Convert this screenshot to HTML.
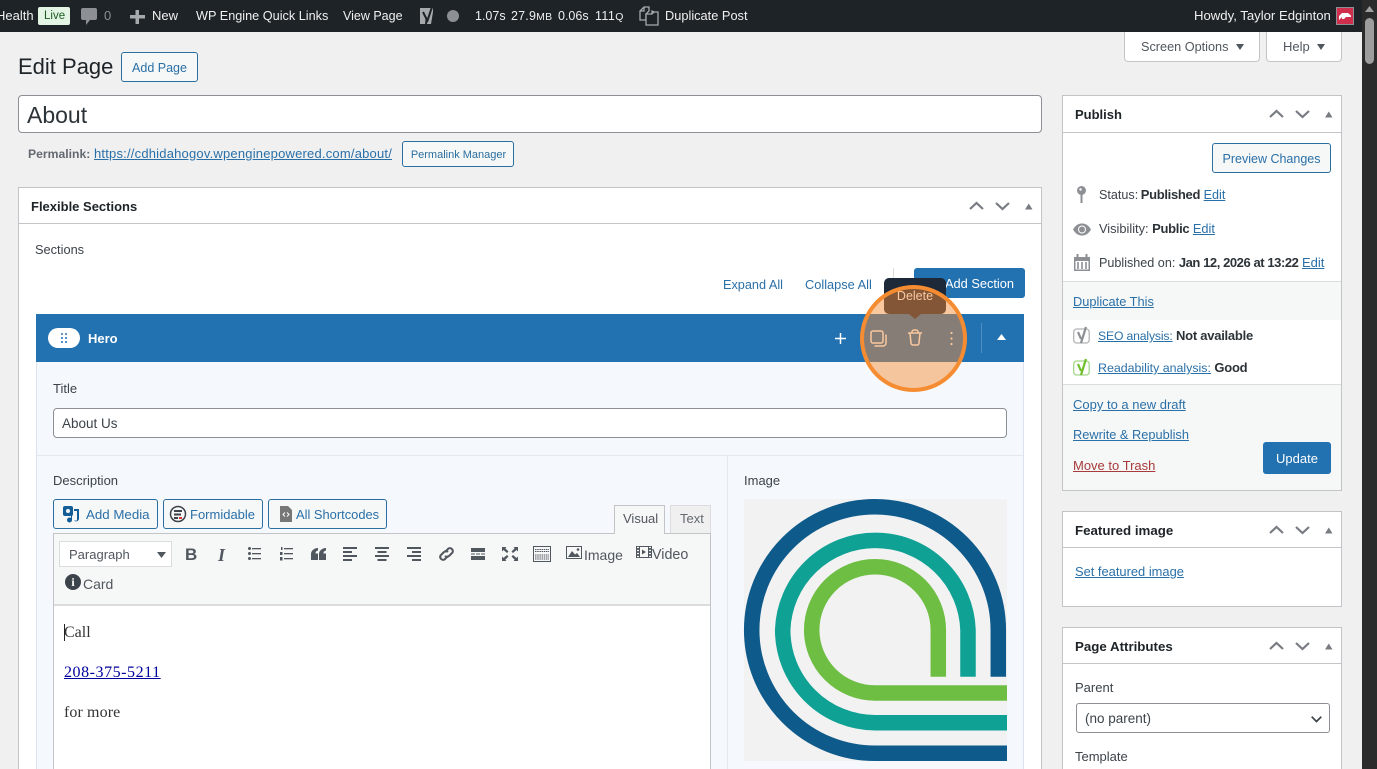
<!DOCTYPE html>
<html lang="en"><head><meta charset="utf-8"><title>Edit Page</title>
<style>
html,body{margin:0;padding:0;width:1377px;height:769px;overflow:hidden;background:#f0f0f1}
body{position:relative;font-family:"Liberation Sans",sans-serif;font-size:13px;color:#3c434a}
.t{position:absolute;white-space:nowrap;line-height:20px;margin-top:1px}
.w,.g,.n{margin-top:0}
.b{position:absolute;box-sizing:border-box}
.l{color:#2a70a8;text-decoration:underline}
.lk{color:#2a70a8}
.w{color:#f0f0f1}
.g{color:#8c8f94}
.btn{position:absolute;box-sizing:border-box;border:1px solid #2a6f9f;border-radius:3px;background:#f6f7f7;color:#2a70a8;text-align:center;white-space:nowrap}
.h{font-weight:bold;color:#1d2327;font-size:13.300px}
.s{font-weight:bold;letter-spacing:-.25px;color:#2c3338;font-size:13px}
svg{position:absolute;overflow:visible}
</style></head><body>
<svg width="0" height="0" style="position:absolute"><defs>
<g id="ctl" fill="none" stroke="#787c82" stroke-width="2.200"><path d="M0 6 L6.500 0 L13 6"/><path d="M26 0 L32.500 6 L39 0"/><path d="M55 6.500 H62.500 L58.750 .5 Z" fill="#787c82" stroke="none"/></g>
</defs></svg>

<!-- admin bar -->
<div class="b" style="left:0;top:0;width:1377px;height:32px;background:#1d2327"></div>
<span class="t w" style="left:-4px;top:6px">Health</span>
<div class="b" style="left:38px;top:7px;width:32px;height:18px;background:#e3f3e4;border-radius:2px"></div>
<span class="t n" style="left:44px;top:6px;color:#1a5c1f;font-size:11.500px">Live</span>
<svg style="left:81px;top:8px" width="16" height="18"><path d="M2 0H14a2 2 0 0 1 2 2V10a2 2 0 0 1-2 2H9L5 17V12H2a2 2 0 0 1-2-2V2a2 2 0 0 1 2-2Z" fill="#8c8f94"/></svg>
<span class="t g" style="left:104px;top:6px">0</span>
<svg style="left:130px;top:10px" width="15" height="14"><path d="M5.500 0H9V5H15V8.500H9V14H5.500V8.500H0V5H5.500Z" fill="#a7aaad"/></svg>
<span class="t w" style="left:152px;top:6px">New</span>
<span class="t w" style="left:196px;top:6px;font-size:12.700px">WP Engine Quick Links</span>
<span class="t w" style="left:343px;top:6px;font-size:12.500px">View Page</span>
<svg style="left:418px;top:7px" width="18" height="19"><path d="M2 1H15V5L13 17H2Z" fill="#a7aaad"/><path d="M5 5L8.500 12L8 17M14 0L9 15" stroke="#1d2327" stroke-width="2" fill="none"/></svg>
<div class="b" style="left:447px;top:10px;width:12px;height:12px;border-radius:50%;background:#8c8f94"></div>
<span class="t w" style="left:475px;top:6px;font-size:12.500px">1.07s</span>
<span class="t w" style="left:511px;top:6px;font-size:12.500px;letter-spacing:.2px">27.9<span style="font-size:10.500px">MB</span></span>
<span class="t w" style="left:558px;top:6px;font-size:12.500px">0.06s</span>
<span class="t w" style="left:595px;top:6px;font-size:12.500px;letter-spacing:.4px">111<span style="font-size:10.500px">Q</span></span>
<svg style="left:639px;top:6px" width="20" height="20" fill="none" stroke="#a7aaad" stroke-width="1.300"><path d="M1 14V5L5 1H10V5L7 8V14Z"/><path d="M7 8H13L15 6H19V19H7Z" fill="#1d2327"/><path d="M5 1V5H1"/><path d="M13 8V5L15 6"/></svg>
<span class="t w" style="left:665px;top:6px;font-size:12.800px">Duplicate Post</span>
<span class="t w" style="left:1194px;top:6px;font-size:13.150px">Howdy, Taylor Edginton</span>
<div class="b" style="left:1336px;top:7px;width:18px;height:18px;background:#cf2e4c;border:1px solid #8d8f94"></div>
<svg style="left:1339px;top:12px" width="12" height="8"><path d="M0 8V4L3 1H9L12 3.500V5H7L5 7H3V5Z" fill="#fff"/></svg>

<!-- scrollbar -->
<div class="b" style="left:1362px;top:0;width:15px;height:769px;background:#2b2b2b"></div>
<svg style="left:1365px;top:6px" width="9" height="6"><path d="M0 6L4.500 0L9 6Z" fill="#a0a0a0"/></svg>
<div class="b" style="left:1365px;top:18px;width:9px;height:46px;border-radius:5px;background:#9d9d9d"></div>

<!-- screen options -->
<div class="b" style="left:1124px;top:32px;width:136px;height:30px;background:#fff;border:1px solid #c3c4c7;border-top:0;border-radius:0 0 4px 4px"></div>
<span class="t" style="left:1141px;top:36px;color:#50575e;font-size:12.700px">Screen Options</span>
<svg style="left:1236px;top:44px" width="8" height="6"><path d="M0 0H8L4 6Z" fill="#50575e"/></svg>
<div class="b" style="left:1266px;top:32px;width:76px;height:30px;background:#fff;border:1px solid #c3c4c7;border-top:0;border-radius:0 0 4px 4px"></div>
<span class="t" style="left:1283px;top:36px;color:#50575e">Help</span>
<svg style="left:1317px;top:44px" width="8" height="6"><path d="M0 0H8L4 6Z" fill="#50575e"/></svg>

<!-- heading -->
<span class="t n" style="left:18px;top:54px;font-size:22px;line-height:26px;color:#1d2327">Edit Page</span>
<div class="btn" style="left:121px;top:52px;width:77px;height:30px;line-height:30px;font-size:12.500px">Add Page</div>

<!-- title -->
<div class="b" style="left:18px;top:95px;width:1024px;height:38px;background:#fff;border:1px solid #8c8f94;border-radius:4px"></div>
<span class="t n" style="left:27px;top:102px;font-size:23px;line-height:26px;color:#2c3338">About</span>
<span class="t" style="left:28px;top:143px;font-size:12.200px;color:#646970"><b>Permalink:</b></span>
<span class="t l" style="left:94px;top:143px;letter-spacing:.2px">https://cdhidahogov.wpenginepowered.com/about/</span>
<div class="btn" style="left:402px;top:141px;width:112px;height:26px;line-height:26px;font-size:11px;color:#2a6f9f;padding-left:1px">Permalink Manager</div>

<!-- flexible sections -->
<div class="b" style="left:18px;top:187px;width:1024px;height:600px;background:#fff;border:1px solid #c3c4c7"></div>
<div class="b" style="left:19px;top:223px;width:1022px;height:1px;background:#c3c4c7"></div>
<span class="t h" style="left:31px;top:196px;font-size:13px">Flexible Sections</span>
<svg style="left:970px;top:203px" width="60" height="8"><use href="#ctl"/></svg>
<span class="t" style="left:35px;top:239px;font-size:12.800px">Sections</span>
<span class="t lk" style="left:723px;top:274px;font-size:12.700px">Expand All</span>
<span class="t lk" style="left:805px;top:274px;font-size:12.800px">Collapse All</span>
<div class="b" style="left:893px;top:268px;width:1px;height:30px;background:#dcdcde"></div>
<div class="b" style="left:914px;top:268px;width:111px;height:30px;background:#2271b1;border-radius:3px"></div>
<span class="t" style="left:945px;top:273px;color:#fff;font-size:12.800px">Add Section</span>

<!-- hero -->
<div class="b" style="left:36px;top:362px;width:988px;height:420px;background:#f5f9fd;border:1px solid #dbe3ee;border-top:0"></div>
<div class="b" style="left:36px;top:314px;width:988px;height:48px;background:#2271b1"></div>
<div class="b" style="left:48px;top:328px;width:32px;height:20px;border-radius:10px;background:#fff"></div>
<svg style="left:61px;top:333px" width="7" height="10" fill="#2271b1"><circle cx="1" cy="1" r="1"/><circle cx="5" cy="1" r="1"/><circle cx="1" cy="5" r="1"/><circle cx="5" cy="5" r="1"/><circle cx="1" cy="9" r="1"/><circle cx="5" cy="9" r="1"/></svg>
<span class="t" style="left:88px;top:328px;color:#fff;font-weight:bold">Hero</span>
<svg style="left:835px;top:333px" width="11" height="11"><path d="M5.500 0V11M0 5.500H11" stroke="#fff" stroke-width="1.500"/></svg>
<svg style="left:870px;top:330px" width="18" height="17" fill="none" stroke="#fff" stroke-width="1.500"><rect x="1" y="1" width="12" height="12" rx="2"/><path d="M16 4.500V13a3 3 0 0 1-3 3H4.500"/></svg>
<svg style="left:908px;top:329px" width="14" height="17" fill="none" stroke="#fff" stroke-width="1.500"><path d="M0 4H14M4 4V3a2 2 0 0 1 2-2H8a2 2 0 0 1 2 2V4M2 4L3 14a2 2 0 0 0 2 2H9a2 2 0 0 0 2-2L12 4"/></svg>
<svg style="left:950px;top:331px" width="3" height="15" fill="#fff"><circle cx="1.500" cy="2" r="1.100"/><circle cx="1.500" cy="7.500" r="1.100"/><circle cx="1.500" cy="13" r="1.100"/></svg>
<div class="b" style="left:981px;top:323px;width:1px;height:30px;background:#4e8ec2"></div>
<svg style="left:997px;top:334px" width="9" height="6"><path d="M0 6L4.500 0L9 6Z" fill="#fff"/></svg>

<span class="t" style="left:53px;top:378px">Title</span>
<div class="b" style="left:53px;top:408px;width:954px;height:30px;background:#fff;border:1px solid #8c8f94;border-radius:4px"></div>
<span class="t" style="left:62px;top:413px;font-size:13.500px">About Us</span>
<div class="b" style="left:37px;top:455px;width:986px;height:1px;background:#e4e9f0"></div>
<div class="b" style="left:727px;top:455px;width:1px;height:320px;background:#e4e9f0"></div>

<span class="t" style="left:53px;top:470px">Description</span>
<span class="t" style="left:744px;top:470px">Image</span>

<!-- media buttons -->
<div class="btn" style="left:53px;top:499px;width:105px;height:30px"></div>
<svg style="left:63px;top:506px" width="17" height="17" fill="#135e96"><rect x="0" y="0" width="10" height="10" rx="2"/><circle cx="5" cy="5" r="2" fill="#f6f7f7"/><path d="M11 3H16V13a3 3 0 0 1-5 1.500H14V5H11Z"/><circle cx="6.500" cy="14" r="2.500"/><path d="M8 8V14H9V8Z"/></svg>
<span class="t" style="left:86px;top:504px;color:#2a70a8;font-size:13.300px">Add Media</span>
<div class="btn" style="left:163px;top:499px;width:100px;height:30px"></div>
<svg style="left:169px;top:505px" width="18" height="18" fill="none"><circle cx="9" cy="9" r="7.500" stroke="#3c434a" stroke-width="1.500"/><path d="M5 5H13V7H5ZM5 8.500H12V10.500H5ZM5 12H9V14H5Z" fill="#3c434a"/><rect x="10" y="12" width="3" height="2" fill="#d63638"/></svg>
<span class="t" style="left:190px;top:504px;color:#2a70a8">Formidable</span>
<div class="btn" style="left:268px;top:499px;width:119px;height:30px"></div>
<svg style="left:280px;top:506px" width="12" height="16"><path d="M0 0H8L12 4V16H0Z" fill="#777"/><path d="M5 6.500L3 8.500L5 10.500M7 6.500L9 8.500L7 10.500" stroke="#fff" fill="none"/></svg>
<span class="t" style="left:296px;top:504px;color:#2a70a8;font-size:12.900px">All Shortcodes</span>

<!-- tabs -->
<div class="b" style="left:614px;top:505px;width:51px;height:29px;background:#f6f7f7;border:1px solid #c3c4c7;border-bottom:0;z-index:2"></div>
<span class="t" style="left:623px;top:508px;z-index:3;color:#50575e">Visual</span>
<div class="b" style="left:670px;top:505px;width:41px;height:29px;background:#f0f0f1;border:1px solid #dcdcde;border-bottom:0"></div>
<span class="t" style="left:680px;top:508px;color:#646970">Text</span>

<!-- toolbar -->
<div class="b" style="left:53px;top:533px;width:658px;height:240px;background:#fff;border:1px solid #c3c4c7"></div>
<div class="b" style="left:54px;top:534px;width:656px;height:70px;background:#f6f7f7"></div>
<div class="b" style="left:54px;top:604px;width:656px;height:2px;background:#dcdcde"></div>
<div class="b" style="left:59px;top:541px;width:113px;height:26px;background:#fff;border:1px solid #dcdcde"></div>
<span class="t" style="left:69px;top:544px;color:#50575e">Paragraph</span>
<svg style="left:157px;top:552px" width="9" height="6"><path d="M0 0H9L4.500 6Z" fill="#50575e"/></svg>
<span class="t" style="left:185px;top:544px;font-size:17px;font-weight:bold;color:#50575e">B</span>
<span class="t" style="left:218px;top:544px;font-size:18px;font-weight:bold;font-style:italic;font-family:'Liberation Serif',serif;color:#50575e">I</span>
<svg style="left:248px;top:547px" width="13" height="14" fill="#50575e"><rect x="4" y="1" width="9" height="1.300"/><rect x="4" y="6" width="9" height="1.300"/><rect x="4" y="11" width="9" height="1.300"/><circle cx="1.500" cy="1.500" r="1.500"/><circle cx="1.500" cy="6.500" r="1.500"/><circle cx="1.500" cy="11.500" r="1.500"/></svg>
<svg style="left:280px;top:547px" width="13" height="14" fill="#50575e"><rect x="4" y="1" width="9" height="1.300"/><rect x="4" y="6" width="9" height="1.300"/><rect x="4" y="11" width="9" height="1.300"/><rect x="1" y="0" width="1.500" height="3"/><rect x="0" y="5" width="2.500" height="3"/><rect x="0" y="10" width="2.500" height="3.500"/></svg>
<svg style="left:311px;top:548px" width="15" height="12" fill="#50575e"><path d="M7 0V2.500C5 3 4.500 4 4.500 5.500H7V12H0V6C0 3 3 0 7 0ZM15 0V2.500C13 3 12.500 4 12.500 5.500H15V12H8V6C8 3 11 0 15 0Z"/></svg>
<svg style="left:343px;top:547px" width="14" height="14" fill="#50575e"><rect y="0" width="14" height="2"/><rect y="4" width="9" height="2"/><rect y="8" width="14" height="2"/><rect y="12" width="9" height="2"/></svg>
<svg style="left:375px;top:547px" width="14" height="14" fill="#50575e"><rect y="0" width="14" height="2"/><rect x="2.500" y="4" width="9" height="2"/><rect y="8" width="14" height="2"/><rect x="2.500" y="12" width="9" height="2"/></svg>
<svg style="left:407px;top:547px" width="14" height="14" fill="#50575e"><rect y="0" width="14" height="2"/><rect x="5" y="4" width="9" height="2"/><rect y="8" width="14" height="2"/><rect x="5" y="12" width="9" height="2"/></svg>
<svg style="left:438px;top:546px" width="17" height="16" fill="none" stroke="#50575e" stroke-width="2"><path d="M7 6L10.500 2.500a3 3 0 0 1 4 4L11 10a3 3 0 0 1-4 0"/><path d="M10 10L6.500 13.500a3 3 0 0 1-4-4L6 6a3 3 0 0 1 4 0"/></svg>
<svg style="left:471px;top:548px" width="14" height="12" fill="#50575e"><rect width="14" height="4"/><rect y="5.500" width="4" height="1"/><rect x="5" y="5.500" width="4" height="1"/><rect x="10" y="5.500" width="4" height="1"/><rect y="8" width="14" height="4"/></svg>
<svg style="left:502px;top:547px" width="16" height="14" fill="#50575e"><path d="M0 0H4.500L3.300 1.200L6.500 4.500L5 6L1.500 3L0 4.500ZM16 0H11.500L12.700 1.200L9.500 4.500L11 6L14.500 3L16 4.500ZM0 14H4.500L3.300 12.800L6.500 9.500L5 8L1.500 11L0 9.500ZM16 14H11.500L12.700 12.800L9.500 9.500L11 8L14.500 11L16 9.500Z"/></svg>
<svg style="left:533px;top:546px" width="18" height="16" fill="none" stroke="#50575e"><rect x=".5" y=".5" width="17" height="15"/><path d="M2 3.500H16M2 5.500H16M2 9H16M2 11H16M2 13H16" stroke-dasharray="1.500 .7"/></svg>
<svg style="left:566px;top:546px" width="16" height="13"><rect x=".5" y=".5" width="15" height="12" fill="#f6f7f7" stroke="#50575e"/><path d="M2 11L6 5L9 8.500L11 7L14 11Z" fill="#50575e"/><circle cx="12" cy="3.500" r="1.300" fill="#50575e"/></svg>
<span class="t" style="left:584px;top:544px;font-size:14px;color:#50575e">Image</span>
<svg style="left:636px;top:546px" width="16" height="12"><rect width="16" height="12" fill="#50575e"/><path d="M1 1.500H3M1 4.500H3M1 7.500H3M1 10.500H3M13 1.500H15M13 4.500H15M13 7.500H15M13 10.500H15" stroke="#f6f7f7" stroke-width="1.200"/><rect x="4" y="1" width="8" height="10" fill="#f6f7f7"/><path d="M6 3.500L10 6L6 8.500Z" fill="#50575e"/></svg>
<span class="t" style="left:652px;top:544px;font-size:14.300px;color:#50575e">Video</span>
<div class="b" style="left:65px;top:574px;width:16px;height:16px;border-radius:50%;background:#3c434a"></div>
<span class="t n" style="left:65px;top:572px;width:16px;text-align:center;color:#fff;font:bold 12px/20px 'Liberation Serif',serif">i</span>
<span class="t n" style="left:83px;top:574px;font-size:14px;color:#50575e">Card</span>

<!-- editor -->
<div class="b" style="left:64px;top:624px;width:1px;height:17px;background:#222"></div>
<span class="t" style="left:64px;top:622px;font:16px/20px 'Liberation Serif',serif;color:#333">Call</span>
<span class="t" style="left:64px;top:662px;font:16px/20px 'Liberation Serif',serif;color:#00009c;text-decoration:underline;letter-spacing:.55px">208-375-5211</span>
<span class="t" style="left:64px;top:702px;font:16px/20px 'Liberation Serif',serif;color:#333;letter-spacing:.1px">for more</span>

<!-- logo -->
<svg style="left:0;top:0" width="1377" height="769" fill="none" stroke-width="15.500">
<rect x="744" y="499" width="263" height="262" fill="#f2f2f2" stroke="none"/>
<path d="M998.300 676.700V630A123.300 123.300 0 0 0 751.700 630A123.300 123.300 0 0 0 875 753.300H1007" stroke="#0e5a8a"/>
<path d="M968 676.700V630A92.700 92.700 0 0 0 782.700 630A92.700 92.700 0 0 0 875 722.700H1007" stroke="#0ea194"/>
<path d="M938.300 676.700V630A63.300 63.300 0 0 0 811.700 630A63.300 63.300 0 0 0 875 693H1007" stroke="#6fbe44"/>
</svg>

<!-- publish -->
<div class="b" style="left:1062px;top:95px;width:280px;height:396px;background:#fff;border:1px solid #c3c4c7"></div>
<div class="b" style="left:1063px;top:132px;width:278px;height:1px;background:#c3c4c7"></div>
<span class="t h" style="left:1075px;top:104px;font-size:13px">Publish</span>
<svg style="left:1270px;top:111px" width="60" height="8"><use href="#ctl"/></svg>
<div class="btn" style="left:1212px;top:143px;width:119px;height:30px;line-height:30px;font-size:12.500px">Preview Changes</div>
<svg style="left:1077px;top:186px" width="10" height="17"><circle cx="4.500" cy="4.500" r="4.500" fill="#8c8f94"/><rect x="3.500" y="7" width="2" height="10" fill="#8c8f94"/><circle cx="3.500" cy="3.500" r="1.200" fill="#fff"/></svg>
<span class="t" style="left:1099px;top:184px;font-size:12.600px">Status: <span class="s" style="letter-spacing:-.3px;margin-left:-1px">Published</span> <span class="l">Edit</span></span>
<svg style="left:1073px;top:223px" width="18" height="13"><path d="M0 6.500C3 1.500 6 .5 9 .5S15 1.500 18 6.500C15 11.500 12 12.500 9 12.500S3 11.500 0 6.500Z" fill="#8c8f94"/><circle cx="9" cy="6.500" r="4" fill="#fff"/><circle cx="9" cy="6.500" r="3" fill="#8c8f94"/></svg>
<span class="t" style="left:1099px;top:218px;font-size:12.800px">Visibility: <span class="s" style="letter-spacing:-.3px">Public</span> <span class="l">Edit</span></span>
<svg style="left:1074px;top:254px" width="16" height="17"><path d="M0 3H16V17H0Z" fill="#8c8f94"/><rect x="1.500" y="7" width="13" height="8.500" fill="#fff"/><path d="M3.500 0V5M12.500 0V5" stroke="#8c8f94" stroke-width="2"/><path d="M4 8V15M8 8V15M12 8V15" stroke="#8c8f94" stroke-width="1.600"/></svg>
<span class="t" style="left:1099px;top:252px;font-size:12.600px">Published on: <span class="s" style="letter-spacing:-.43px">Jan 12, 2026 at 13:22</span> <span class="l" style="font-size:13px">Edit</span></span>
<div class="b" style="left:1063px;top:281px;width:278px;height:39px;background:#f6f7f7;border-top:1px solid #dcdcde"></div>
<span class="t l" style="left:1073px;top:291px;font-size:12.800px">Duplicate This</span>
<svg style="left:1073px;top:327px" width="18" height="17" fill="none"><rect x=".7" y="2" width="15.500" height="14" rx="3" stroke="#b5b5b5" stroke-width="1.300"/><path d="M5 5L8 12M13 0L8 16" stroke="#8c8f94" stroke-width="2.200"/></svg>
<span class="t" style="left:1098px;top:325px;font-size:12.200px"><span class="l" style="letter-spacing:-.15px">SEO analysis:</span> <span class="s">Not available</span></span>
<svg style="left:1073px;top:359px" width="18" height="17" fill="none"><rect x=".7" y="2" width="15.500" height="14" rx="3" stroke="#a4d88a" stroke-width="1.300"/><path d="M5 5L8 12M13 0L8 16" stroke="#6fbe2c" stroke-width="2.200"/></svg>
<span class="t" style="left:1098px;top:357px;font-size:12.400px"><span class="l">Readability analysis:</span> <span class="s">Good</span></span>
<div class="b" style="left:1063px;top:384px;width:278px;height:106px;background:#f6f7f7;border-top:1px solid #dcdcde"></div>
<span class="t l" style="left:1073px;top:394px">Copy to a new draft</span>
<span class="t l" style="left:1073px;top:424px;font-size:12.800px">Rewrite &amp; Republish</span>
<span class="t" style="left:1073px;top:455px;color:#a83a3c;text-decoration:underline">Move to Trash</span>
<div class="b" style="left:1263px;top:442px;width:68px;height:32px;background:#2271b1;border-radius:3px"></div>
<span class="t" style="left:1263px;top:448px;width:68px;text-align:center;color:#fff">Update</span>

<!-- featured -->
<div class="b" style="left:1062px;top:511px;width:280px;height:96px;background:#fff;border:1px solid #c3c4c7"></div>
<div class="b" style="left:1063px;top:547px;width:278px;height:1px;background:#c3c4c7"></div>
<span class="t h" style="left:1075px;top:520px">Featured image</span>
<svg style="left:1270px;top:527px" width="60" height="8"><use href="#ctl"/></svg>
<span class="t l" style="left:1075px;top:561px;font-size:12.900px">Set featured image</span>

<!-- attributes -->
<div class="b" style="left:1062px;top:627px;width:280px;height:160px;background:#fff;border:1px solid #c3c4c7"></div>
<div class="b" style="left:1063px;top:663px;width:278px;height:1px;background:#c3c4c7"></div>
<span class="t h" style="left:1075px;top:636px">Page Attributes</span>
<svg style="left:1270px;top:643px" width="60" height="8"><use href="#ctl"/></svg>
<span class="t" style="left:1075px;top:677px">Parent</span>
<div class="b" style="left:1076px;top:703px;width:254px;height:30px;background:#fff;border:1px solid #8c8f94;border-radius:3px"></div>
<span class="t" style="left:1085px;top:708px;font-size:13.500px">(no parent)</span>
<svg style="left:1311px;top:716px" width="11" height="7"><path d="M.7 .7L5.500 5.500L10.300 .7" fill="none" stroke="#3c434a" stroke-width="1.700"/></svg>
<span class="t" style="left:1075px;top:746px">Template</span>

<!-- tooltip + highlight -->
<div class="b" style="left:884px;top:278px;width:62px;height:36px;background:#1d2939;border-radius:5px"></div>
<svg style="left:909px;top:314px" width="12" height="5"><path d="M0 0H12L6 5Z" fill="#1d2939"/></svg>
<span class="t n" style="left:884px;top:286px;width:62px;text-align:center;color:#fff;font-size:12.500px;z-index:2">Delete</span>
<div class="b" style="left:860px;top:285px;width:107px;height:107px;border-radius:50%;background:rgba(245,139,50,.47);border:4.500px solid #f68c32;z-index:5"></div>
</body></html>
